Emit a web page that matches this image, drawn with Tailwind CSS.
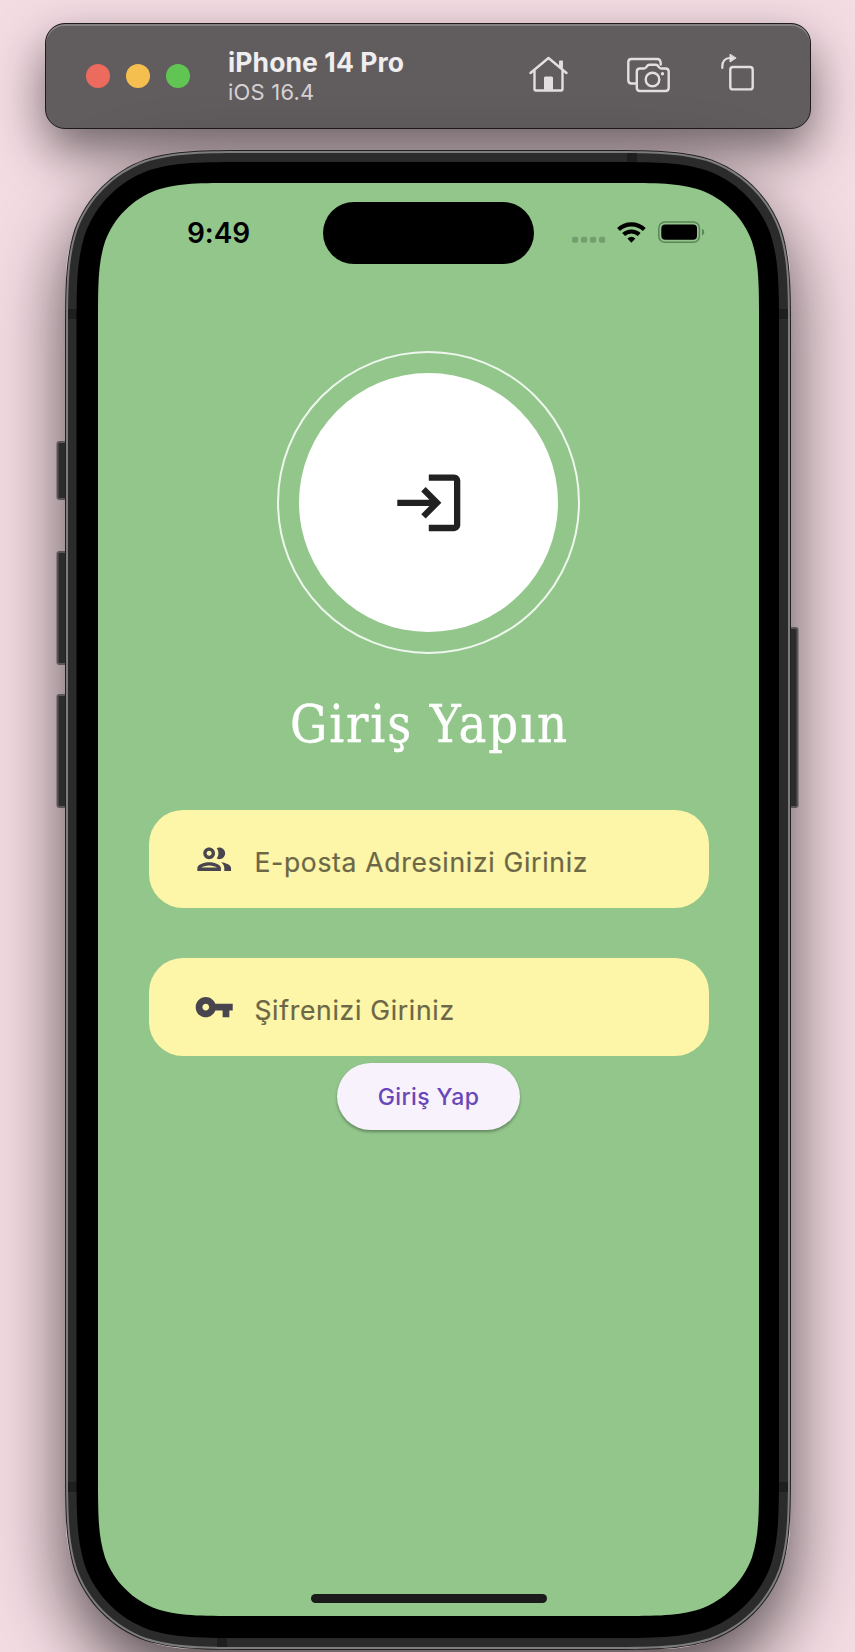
<!DOCTYPE html>
<html lang="tr">
<head>
<meta charset="utf-8">
<title>Giriş Yapın</title>
<script src="https://cdn.jsdelivr.net/npm/@tailwindcss/browser@4"></script>
</head>
<body class="bg-[#f4dce3] font-['Inter','Liberation_Sans',sans-serif]">
<div class="relative h-[1652px] w-[855px] overflow-hidden pt-[23px]">

  <!-- Simulator toolbar -->
  <header class="ml-[45px] flex h-[106px] w-[766px] items-center rounded-[20px] border border-[#1f1b1d] bg-[#615d5e] pl-[40px] shadow-[inset_0_2px_0_#858182,0_22px_50px_rgba(0,0,0,0.55)]">
    <div class="flex gap-4">
      <span class="size-6 rounded-full bg-[#ed6a5e]"></span>
      <span class="size-6 rounded-full bg-[#f5bf4f]"></span>
      <span class="size-6 rounded-full bg-[#61c554]"></span>
    </div>
    <div class="ml-[38px] w-[298px] whitespace-nowrap">
      <div class="text-[26.500px] leading-[31px] font-bold tracking-[0.1px] text-[#efedee]">iPhone 14 Pro</div>
      <div class="text-[22px] leading-[28px] tracking-[0.2px] text-[#d6d1d3]">iOS 16.4</div>
    </div>
    <svg class="h-[44px] w-[232px] shrink-0" viewBox="525 53.500 232 44" fill="none" stroke="#e3dee0" stroke-width="2.400" stroke-linecap="round" stroke-linejoin="round">
      <path d="M529.500 72.500 547.500 57.500 565.500 72.500M533.500 70V88.500q0 1.500 1.500 1.500H560q1.500 0 1.500-1.500V70"/>
      <path d="M558.800 61V60.700H561.200V67L558.800 65Z" fill="#e3dee0" stroke-width="1.500"/>
      <path d="M543.500 89V77q0-.5.5-.5H551q.5 0 .5.5V89Z" fill="#e3dee0" stroke-width="1"/>
      <path d="M634 83H630.500Q627.300 83 627.300 79.800V61.700Q627.300 58.500 630.500 58.500H656Q659.500 58.500 659.700 62.500V64"/>
      <path d="M639 68H643Q644.500 68 645.400 66.500L646.300 65.200Q647 64.200 648.200 64.200H655Q656.200 64.200 656.900 65.200L657.800 66.500Q658.700 68 660.200 68H664.500Q667.700 68 667.700 71.200V87.300Q667.700 90.500 664.500 90.500H639Q635.800 90.500 635.800 87.300V71.200Q635.800 68 639 68Z"/>
      <circle cx="651.500" cy="79" r="6.800"/><circle cx="661.500" cy="73.300" r="1.700" fill="#e3dee0" stroke="none"/>
      <rect x="729.300" y="66.500" width="22.400" height="22.400" rx="2.700"/>
      <path d="M721.300 67.500V66Q721.300 58 729 57.500" stroke-width="2.200"/>
      <path d="M729 54V61.500L734.800 57.700Z" fill="#e3dee0" stroke-width="1"/>
    </svg>
  </header>

  <!-- Device shell -->
  <div class="absolute top-[151px] left-[66px] h-[1498px] w-[724px] rounded-[126px] shadow-[0_30px_72px_rgba(0,0,0,0.68)]"></div>
  <svg class="absolute inset-0" width="855" height="1652" fill="none">
    <g fill="#2b2d2c" stroke="#5c5659" stroke-width="2">
      <rect x="57.500" y="442" width="16" height="57" rx="2"/><rect x="57.500" y="552" width="16" height="112" rx="2"/><rect x="57.500" y="695" width="16" height="112" rx="2"/><rect x="781" y="628" width="16.500" height="179" rx="2"/>
    </g>
    <path data-shape="65 150 726 1500 126" fill="#232021"/>
    <path data-shape="66 151 724 1498 125" fill="#7d7d7d"/>
    <path data-shape="68 153 720 1494 123" fill="#2b2b2b"/>
    <path fill="#1e1e1e" d="M627 153h10v10h-10zM68 309h10v10h-10zM778 309h10v10h-10zM68 1482h10v10h-10zM778 1482h10v10h-10zM217 1637h10v10h-10z"/>
    <path data-shape="76.500 162 702.500 1476 114" fill="#000"/>
    <path data-shape="98 183 661 1433 93" fill="#92c68b"/>
  </svg>

  <!-- Screen -->
  <main class="relative mt-[54px] ml-[98px] flex h-[1433px] w-[661px] flex-col items-center">
    <div class="mt-[19px] flex h-[62px] w-full items-center">
      <div class="w-[225px] pl-[89px] pb-[1px] text-[28px] leading-[36px] font-semibold tracking-[-0.1px] text-black">9:49</div>
      <div class="h-[62px] w-[211px] rounded-full bg-black"></div>
      <svg class="ml-[36px] h-[26px] w-[140px]" viewBox="570 219.700 140 26">
        <g fill="#749e6f"><rect x="572" y="236.500" width="6.200" height="6" rx="1.800"/><rect x="581" y="236.500" width="6.200" height="6" rx="1.800"/><rect x="590" y="236.500" width="6.200" height="6" rx="1.800"/><rect x="599" y="236.500" width="6.200" height="6" rx="1.800"/></g>
        <g fill="none" stroke="#000" stroke-width="4.200"><path d="M618.500 229.300A18.500 18.500 0 0 1 644.300 229.300"/><path d="M623.600 234.300A11.300 11.300 0 0 1 639.200 234.300"/></g>
        <path d="M631.400 242.500 627.400 238.300Q631.400 234.500 635.400 238.300Z"/>
        <rect x="658.800" y="221.600" width="40.600" height="20.400" rx="6" fill="none" stroke="#5f835b" stroke-width="1.500"/>
        <rect x="661.300" y="224.300" width="35.700" height="15.200" rx="4"/>
        <path d="M702 228.500Q704.200 229.300 704.200 232T702 235.500Z" fill="#5f835b"/>
      </svg>
    </div>

    <div class="mt-[87px] flex size-[303px] shrink-0 items-center justify-center rounded-full border-2 border-white/85">
      <div class="flex size-[259px] items-center justify-center rounded-full bg-white">
        <svg class="size-[75.600px]" viewBox="0 0 24 24" fill="#212121"><path d="M11 7 9.600 8.400l2.600 2.600H2v2h10.200l-2.600 2.600L11 17l5-5-5-5zm9 12h-8v2h8c1.100 0 2-.9 2-2V5c0-1.100-.9-2-2-2h-8v2h8v14z"/></svg>
      </div>
    </div>

    <h1 class="mt-[34px] h-[72px] pl-[2px] font-['DejaVu_Serif_Condensed','DejaVu_Serif',serif] text-[52px] leading-[72px] font-normal tracking-[1.9px] whitespace-nowrap text-white [-webkit-text-stroke:0.4px_white] [font-stretch:condensed]">Giriş Yapın</h1>

    <div class="mt-[50px] flex h-[98px] w-[560px] shrink-0 items-center rounded-[34px] bg-[#fdf5a7] pl-[45.500px]">
      <svg class="size-[40.400px]" viewBox="0 0 24 24" fill="#49454f"><path d="M9 13.750c-2.340 0-7 1.170-7 3.500V19h14v-1.750c0-2.330-4.660-3.500-7-3.500zM4.340 17c.84-.58 2.870-1.250 4.660-1.250s3.820.67 4.660 1.250H4.340zM9 12c1.930 0 3.500-1.570 3.500-3.500S10.930 5 9 5 5.500 6.570 5.500 8.500 7.070 12 9 12zm0-5c.83 0 1.500.67 1.500 1.500S9.830 10 9 10s-1.500-.67-1.500-1.500S8.170 7 9 7zm7.040 6.810c1.160.84 1.960 1.960 1.960 3.440V19h4v-1.750c0-2.020-3.500-3.170-5.960-3.440zM15 12c1.930 0 3.500-1.570 3.500-3.500S16.930 5 15 5c-.54 0-1.040.13-1.500.35.63.89 1 1.980 1 3.150s-.37 2.260-1 3.150c.46.22.96.35 1.500.35z"/></svg>
      <span class="ml-[20px] pt-[6px] text-[26.500px] leading-[32px] tracking-[0.700px] whitespace-nowrap text-[#6b6747] [-webkit-text-stroke:0.2px_#6b6747]">E-posta Adresinizi Giriniz</span>
    </div>

    <div class="mt-[50px] flex h-[98px] w-[560px] shrink-0 items-center rounded-[34px] bg-[#fdf5a7] pl-[45.500px]">
      <svg class="size-[40.400px]" viewBox="0 0 24 24" fill="#49454f"><path d="M12.650 10C11.830 7.670 9.610 6 7 6c-3.310 0-6 2.690-6 6s2.690 6 6 6c2.610 0 4.830-1.670 5.650-4H17v4h4v-4h2v-4H12.650zM7 14c-1.100 0-2-.9-2-2s.9-2 2-2 2 .9 2 2-.9 2-2 2z"/></svg>
      <span class="ml-[20px] pt-[6px] text-[26.500px] leading-[32px] tracking-[0.700px] whitespace-nowrap text-[#6b6747] [-webkit-text-stroke:0.2px_#6b6747]">Şifrenizi Giriniz</span>
    </div>

    <button class="mt-[7px] h-[67px] w-[183px] shrink-0 rounded-full bg-[#f7f2fb] pt-[1px] text-[23px] font-medium tracking-[0.4px] text-[#6947b8] shadow-[0_2px_3px_rgba(0,0,0,0.32)]">Giriş Yap</button>

    <div class="mt-auto mb-[13.500px] h-[8.500px] w-[236px] rounded-full bg-[#1a1a1a]"></div>
  </main>
</div>

<script>
  // Rectangle outline with continuous (smoothed) corners
  function smoothRect(x, y, w, h, r) {
    const a = 1.52866 * r, b = 1.08849 * r, c = 0.86841 * r, d = 0.63149 * r, e = 0.07491 * r, f = 0.37282 * r, g = 0.16906 * r;
    const X = x + w, Y = y + h;
    return `M${x + a} ${y}H${X - a}C${X - b} ${y} ${X - c} ${y} ${X - d} ${y + e}C${X - f} ${y + g} ${X - g} ${y + f} ${X - e} ${y + d}C${X} ${y + c} ${X} ${y + b} ${X} ${y + a}` +
      `V${Y - a}C${X} ${Y - b} ${X} ${Y - c} ${X - e} ${Y - d}C${X - g} ${Y - f} ${X - f} ${Y - g} ${X - d} ${Y - e}C${X - c} ${Y} ${X - b} ${Y} ${X - a} ${Y}` +
      `H${x + a}C${x + b} ${Y} ${x + c} ${Y} ${x + d} ${Y - e}C${x + f} ${Y - g} ${x + g} ${Y - f} ${x + e} ${Y - d}C${x} ${Y - c} ${x} ${Y - b} ${x} ${Y - a}` +
      `V${y + a}C${x} ${y + b} ${x} ${y + c} ${x + e} ${y + d}C${x + g} ${y + f} ${x + f} ${y + g} ${x + d} ${y + e}C${x + c} ${y} ${x + b} ${y} ${x + a} ${y}Z`;
  }
  document.querySelectorAll('[data-shape]').forEach(p => p.setAttribute('d', smoothRect(...p.dataset.shape.split(' ').map(Number))));
</script>
</body>
</html>
